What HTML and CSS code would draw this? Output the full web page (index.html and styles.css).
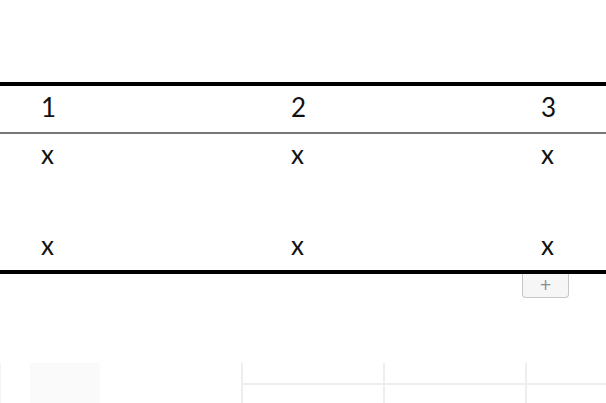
FILE: index.html
```html
<!DOCTYPE html>
<html>
<head>
<meta charset="utf-8">
<link rel="stylesheet" href="styles.css">
</head>
<body>
<div class="page">
  <div class="table-wrap">
    <table class="grid">
      <thead>
        <tr><th>1</th><th>2</th><th>3</th></tr>
      </thead>
      <tbody>
        <tr class="tall"><td>x</td><td>x</td><td>x</td></tr>
        <tr class="last"><td>x</td><td>x</td><td>x</td></tr>
      </tbody>
    </table>
  </div>
  <div class="add-row">
    <button class="add" type="button">+</button>
  </div>
  <div class="ghost">
    <div class="ghost-edge"></div>
    <div class="ghost-box"></div>
    <div class="ghost-cells">
      <div class="ghost-cell"><div class="ghost-head"></div></div>
      <div class="ghost-cell"><div class="ghost-head"></div></div>
      <div class="ghost-cell"><div class="ghost-head"></div></div>
    </div>
  </div>
</div>
</body>
</html>
```
FILE: styles.css
```css
html, body {
  margin: 0;
  padding: 0;
  background: #ffffff;
}
body {
  width: 606px;
  height: 403px;
  overflow: hidden;
  font-family: "Lato", "Open Sans", sans-serif;
  color: #111;
}
.page {
  padding-top: 82px;
}
.table-wrap {
  width: 606px;
  overflow: hidden;
}
.grid {
  width: 750px;
  border-collapse: separate;
  border-spacing: 0;
  border-top: 4px solid #000;
  border-bottom: 4px solid #000;
  table-layout: fixed;
}
.grid th,
.grid td {
  box-sizing: border-box;
  width: 250px;
  text-align: left;
  font-weight: 400;
  font-size: 26px;
  line-height: 30px;
  padding: 6px 0 10px 41px;
  vertical-align: top;
}
.grid th {
  border-bottom: 2px solid #777;
}
.grid .tall td {
  padding: 5px 0 55px 41px;
}
.grid .last td {
  padding: 6px 0 10px 41px;
}
.add-row {
  display: flex;
  justify-content: flex-end;
  padding-right: 37px;
}
.add {
  width: 47px;
  height: 24px;
  margin: 0;
  padding: 0 0 2px;
  border: 1px solid #c6c6c6;
  border-top: none;
  border-radius: 0 0 4px 4px;
  background: #f6f6f6;
  color: #8a8a8a;
  font-family: "DejaVu Sans", sans-serif;
  font-size: 15px;
  line-height: 20px;
}
.ghost {
  display: flex;
  margin-top: 65px;
  height: 41px;
}
.ghost-edge {
  flex: none;
  width: 1px;
  background: #f4f4f4;
}
.ghost-box {
  flex: none;
  width: 70px;
  margin-left: 29px;
  background: #fafafa;
}
.ghost-cells {
  display: flex;
  margin-left: 141px;
  flex: 1;
  min-width: 0;
}
.ghost-cell {
  width: 142px;
  border-left: 2px solid #eeeeee;
  flex: none;
  box-sizing: border-box;
}
.ghost-cell:last-child {
  flex: 1;
}
.ghost-head {
  height: 20px;
  border-bottom: 2px solid #eeeeee;
}
```
